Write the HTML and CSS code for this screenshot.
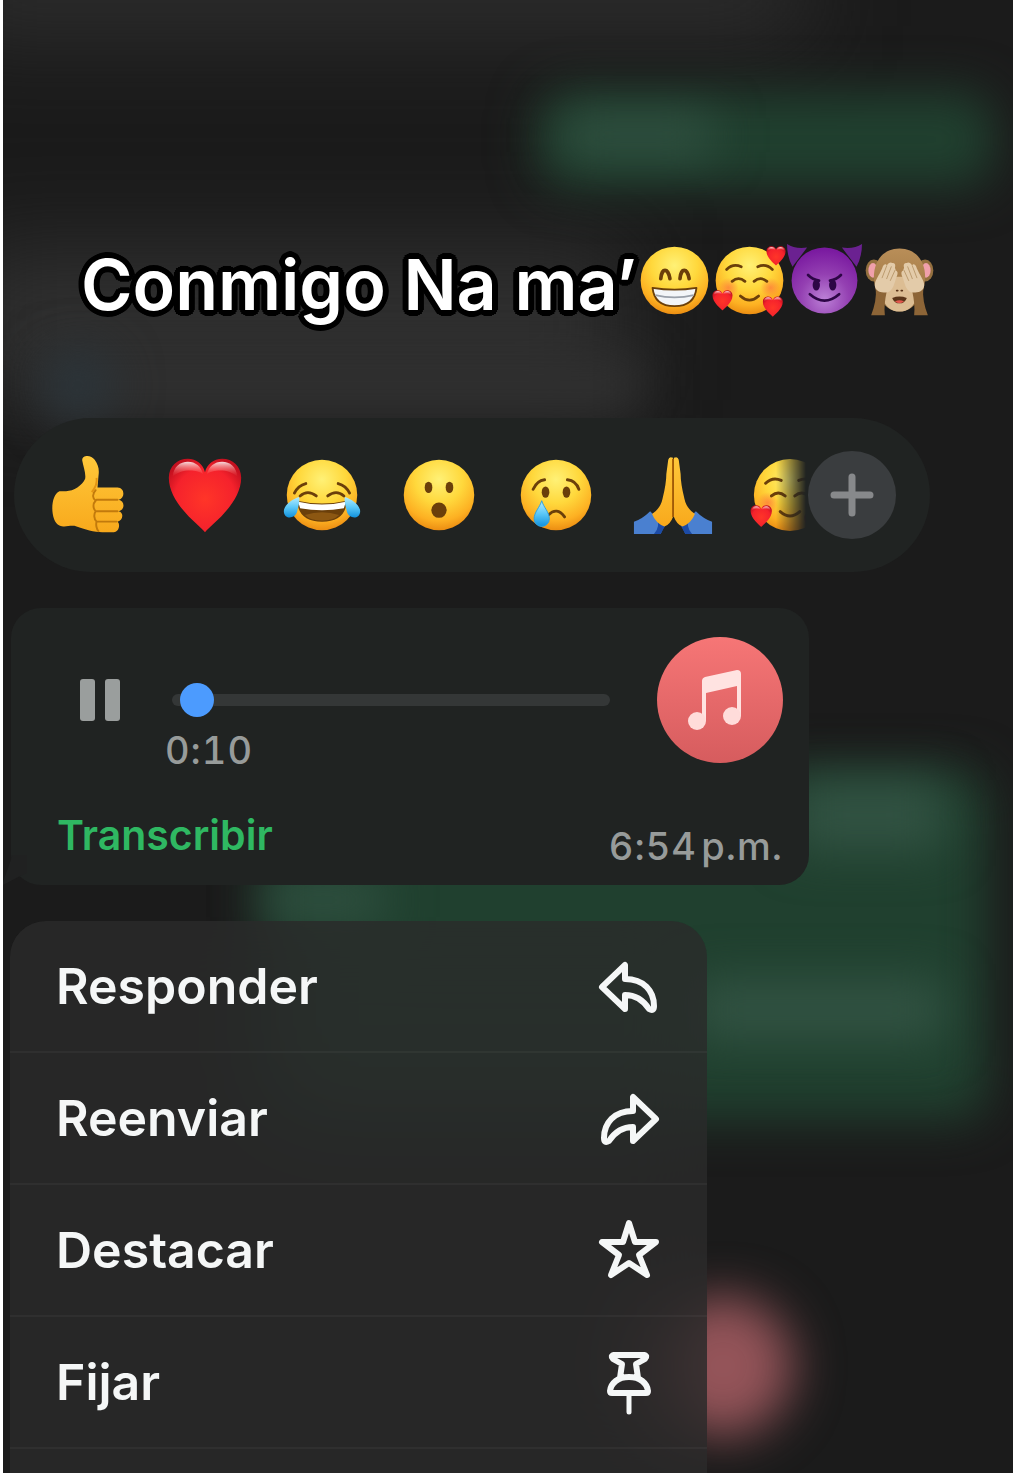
FILE: index.html
```html
<!DOCTYPE html>
<html lang="es">
<head>
  <meta charset="UTF-8" />
  <meta name="viewport" content="width=device-width, initial-scale=1" />
  <title>Conmigo Na ma’</title>
  <link rel="stylesheet" href="styles.css">
</head>
<body>
  <!-- shared emoji drawings -->
  <svg class="defs" width="0" height="0" aria-hidden="true">
    <defs>
      <radialGradient id="face" cx="50%" cy="28%" r="75%">
        <stop offset="0" stop-color="#fff176" />
        <stop offset="0.45" stop-color="#ffd83c" />
        <stop offset="0.78" stop-color="#fdb022" />
        <stop offset="1" stop-color="#e8860f" />
      </radialGradient>
      <radialGradient id="purple" cx="50%" cy="78%" r="75%">
        <stop offset="0" stop-color="#bb80d6" />
        <stop offset="0.5" stop-color="#9440b2" />
        <stop offset="1" stop-color="#7a1aa0" />
      </radialGradient>
      <radialGradient id="red" cx="50%" cy="55%" r="60%">
        <stop offset="0" stop-color="#ff3528" />
        <stop offset="0.7" stop-color="#f5222c" />
        <stop offset="1" stop-color="#c4101f" />
      </radialGradient>
      <linearGradient id="shine" x1="0" y1="0" x2="0" y2="1">
        <stop offset="0" stop-color="#fff" stop-opacity="0.85" />
        <stop offset="1" stop-color="#ff5a55" stop-opacity="0" />
      </linearGradient>
      <linearGradient id="tear" x1="0" y1="0" x2="0" y2="1">
        <stop offset="0" stop-color="#b5ecff" />
        <stop offset="0.5" stop-color="#5cc8f8" />
        <stop offset="1" stop-color="#1191dc" />
      </linearGradient>
      <linearGradient id="skin" x1="0" y1="0" x2="0" y2="1">
        <stop offset="0" stop-color="#ffc83a" />
        <stop offset="1" stop-color="#f8a91c" />
      </linearGradient>
      <linearGradient id="fur" x1="0" y1="0" x2="0" y2="1">
        <stop offset="0" stop-color="#b98e58" />
        <stop offset="1" stop-color="#97703f" />
      </linearGradient>
      <radialGradient id="blush">
        <stop offset="0" stop-color="#ff7a3d" stop-opacity="0.75" />
        <stop offset="1" stop-color="#ff7a3d" stop-opacity="0" />
      </radialGradient>

      <symbol id="heart" viewBox="0 0 80 80">
        <path fill="url(#red)" d="M40 79C36 73 2 50 2 22 2 10 11 2 22 2c9 0 16 6 18 14 2-8 9-14 18-14 11 0 20 8 20 20 0 28-34 51-38 57z" />
        <path fill="url(#shine)" d="M6 21C7 10 14 5 22 5c8 0 14 5 16 13-6-5-24-6-32 3zM42 18C44 10 50 5 58 5c8 0 15 5 16 16-8-9-26-8-32-3z" />
      </symbol>

      <symbol id="thumb" viewBox="-2 -2 84 84">
        <path fill="url(#skin)" d="M10 36h7c8 0 17-6 20-13 1-6-2-13-3-19-1-6 9-7 13-1 4 6 5 10 4 17l-1 12h21c8 0 8 12 1 13 7 1 7 11 0 12 6 1 5 10-1 11 3 2 2 11-4 11H55c-8 0-19-3-27-6-7-2-12 2-18-1-10-4-10-32 0-36z" />
        <path fill="none" stroke="#c27a0c" stroke-width="2" stroke-linecap="round" d="M71 45H49M71 57H49M70 68H50M48 35c-4 4-3 9 0 11-3 3-3 8 0 11-2 3-2 8 1 11-1 3 0 8 2 10" />
        <path fill="none" stroke="#e39312" stroke-width="2" d="M49 22c1 6-1 10-5 15" />
      </symbol>

      <symbol id="joy" viewBox="-2 -2 84 84">
        <circle cx="40" cy="40" r="37" fill="url(#face)" />
        <path class="line" d="M11 38q4-8 12-10M57 28q8 2 12 10M17 41q8-7 17 0M46 41q9-7 17 0" />
        <path fill="#6b3f0a" d="M14 46q26 6 52 0-1 22-26 22T14 46z" />
        <path fill="#fff" d="M15 47q25 6 50 0l-2 7q-23 4-46 0z" />
        <path fill="#8c5712" d="M22 61q18-6 36 0-6 6-18 6t-18-6z" />
        <path fill="url(#tear)" d="M16 42C9 44-1 51 0 58c1 8 12 7 14-1 1-5 3-10 2-15zM64 42c7 2 17 9 16 16-1 8-12 7-14-1-1-5-3-10-2-15z" />
      </symbol>

      <symbol id="wow" viewBox="-2 -2 84 84">
        <circle cx="40" cy="40" r="37" fill="url(#face)" />
        <ellipse class="dark" cx="29" cy="32" rx="4" ry="6" />
        <ellipse class="dark" cx="51" cy="32" rx="4" ry="6" />
        <circle class="dark" cx="40" cy="56" r="8" />
      </symbol>

      <symbol id="cry" viewBox="-2 -2 84 84">
        <circle cx="40" cy="40" r="37" fill="url(#face)" />
        <path class="line" d="M16 34q4-9 12-10M52 24q9 1 12 10M32 61q9-9 17 2" />
        <ellipse class="dark" cx="29" cy="37" rx="4" ry="6" />
        <ellipse class="dark" cx="51" cy="37" rx="4" ry="6" />
        <path fill="url(#tear)" stroke="#2b9fe0" d="M25 46c-2 7-8 12-8 19a8 8 0 0 0 16 0c0-7-6-12-8-19z" />
      </symbol>

      <symbol id="pray" viewBox="-3 -2 84 84">
        <path fill="#4a80d0" d="M-2 81V68q9-3 17-11l15 15-4 9zM80 81V68q-9-3-17-11L48 72l4 9z" />
        <path fill="#1c4ba6" d="M22 63l9 9-5 9h-7q7-8 3-18zM56 63l-9 9 5 9h7q-7-8-3-18z" />
        <path fill="url(#skin)" d="M34 3q1-4 5-2v62q-3 8-9 10-9-3-13-13 9-6 11-16 4-16 4-26zM45 3q-1-4-5-2v62q3 8 9 10 9-3 13-13-9-6-11-16-4-16-4-26z" />
        <path fill="none" stroke="#a85f08" stroke-width="2" d="M39 2v61" />
      </symbol>

      <symbol id="loved" viewBox="-1 -1 82 82">
        <circle cx="40" cy="40" r="37" fill="url(#face)" />
        <circle cx="17" cy="48" r="11" fill="url(#blush)" />
        <circle cx="63" cy="48" r="11" fill="url(#blush)" />
        <path class="line" d="M15 28q7-7 16-3M49 25q9-4 16 3M21 41q7-6 14 0M45 41q7-6 14 0M30 57q10 9 20 0" />
        <use href="#heart" x="58" y="2" width="22" height="22" />
        <use href="#heart" x="-1" y="50" width="23" height="23" />
        <use href="#heart" x="54" y="57" width="23" height="23" />
      </symbol>

      <symbol id="grin" viewBox="-1 -1 82 82">
        <circle cx="40" cy="40" r="37" fill="url(#face)" />
        <path class="line thick" d="M25 38c1-12 8-12 10 0M46 38c1-12 8-12 10 0" />
        <path fill="#f3f5f8" stroke="#6b3f0a" stroke-width="2" stroke-linejoin="round" d="M16 48q24 4 48 0-2 20-24 20T16 48z" />
        <path fill="none" stroke="#9aa0aa" stroke-width="2" d="M19 56q21 5 42 0" />
      </symbol>

      <symbol id="devil" viewBox="-1 -1 82 82">
        <path fill="#6b2191" d="M-1 0q9 6 22 4L5 25Q-1 14-1 0zM81 0q-9 6-22 4l16 21q6-11 6-25z" />
        <circle cx="40" cy="40" r="36" fill="url(#purple)" />
        <path fill="none" stroke="#2d0646" stroke-width="3" stroke-linecap="round" d="M22 34q5 5 12 6M58 34q-5 5-12 6M24 55q16 14 32 0" />
        <ellipse fill="#2d0646" cx="31" cy="45" rx="4" ry="6" />
        <ellipse fill="#2d0646" cx="49" cy="45" rx="4" ry="6" />
      </symbol>

      <symbol id="monkey" viewBox="-1 -1 82 82">
        <ellipse cx="12" cy="29" rx="9" ry="12" fill="#94703f" />
        <ellipse cx="68" cy="29" rx="9" ry="12" fill="#94703f" />
        <ellipse cx="11" cy="29" rx="5" ry="8" fill="#f0a0ab" />
        <ellipse cx="69" cy="29" rx="5" ry="8" fill="#f0a0ab" />
        <path fill="url(#fur)" d="M40 5c18 0 28 14 28 31 0 20-12 38-28 38S12 56 12 36C12 19 22 5 40 5z" />
        <path fill="#dcbd93" d="M40 36c12 0 19 11 18 22-1 10-9 16-18 16s-17-6-18-16c-1-11 6-22 18-22z" />
        <path fill="#8d6537" d="M14 48l12 4c-2 9-3 18-2 26H9c4-10 6-20 5-30zM66 48l-12 4c2 9 3 18 2 26h15c-4-10-6-20-5-30z" />
        <path fill="#e3cba9" d="M32 21c3-1 4 2 3 5l1 3c3 1 2 5 0 9-2 7-4 15-11 15-6 1-12-2-12-8 0-5 5-11 8-18 1-5 5-6 5-3 2-4 5-4 6-3zM48 21c-3-1-4 2-3 5l-1 3c-3 1-2 5 0 9 2 7 4 15 11 15 6 1 12-2 12-8 0-5-5-11-8-18-1-5-5-6-5-3-2-4-5-4-6-3z" />
        <path fill="none" stroke="#b8976a" stroke-linecap="round" d="M26 24l-5 13M31 25l-5 13M35 29l-5 11M54 24l5 13M49 25l5 13M45 29l5 11" />
        <path fill="#5a3519" d="M32 59q8-3 16 0-2 6-8 6t-8-6z" />
        <path fill="#e2574d" d="M35 63q5-3 10 0-5 4-10 0z" />
        <path fill="none" stroke="#5a3519" stroke-width="2" stroke-linecap="round" d="M37 51h1M42 51h1" />
      </symbol>
    </defs>
  </svg>

  <main class="screen">
    <!-- blurred chat behind the menu -->
    <svg class="backdrop" viewBox="0 0 1010 1473" preserveAspectRatio="none" aria-hidden="true">
      <defs>
        <filter id="soft" x="-100%" y="-100%" width="300%" height="300%" color-interpolation-filters="sRGB">
          <feGaussianBlur stdDeviation="24" />
        </filter>
        <filter id="softer" x="-50%" y="-200%" width="200%" height="500%" color-interpolation-filters="sRGB">
          <feGaussianBlur stdDeviation="45" />
        </filter>
      </defs>
      <rect class="glow-grey" x="-60" y="-50" width="860" height="80" filter="url(#softer)" />
      <rect class="glow-grey" x="-40" y="250" width="660" height="150" filter="url(#softer)" />
      <rect class="glow-grey" x="40" y="355" width="600" height="60" filter="url(#soft)" />
      <circle class="glow-blue" cx="75" cy="385" r="35" filter="url(#soft)" />
      <rect class="glow-green" x="535" y="92" width="455" height="95" rx="30" filter="url(#soft)" />
      <rect class="glow-mint" x="560" y="115" width="150" height="40" filter="url(#soft)" />
      <rect class="glow-green" x="260" y="770" width="725" height="350" rx="30" filter="url(#soft)" />
      <rect class="glow-mint" x="260" y="880" width="120" height="40" filter="url(#soft)" />
      <rect class="glow-mint" x="790" y="780" width="150" height="70" filter="url(#soft)" />
      <rect class="glow-mint" x="690" y="980" width="250" height="60" filter="url(#soft)" />
      <circle class="glow-red" cx="720" cy="1366" r="70" filter="url(#soft)" />
    </svg>

    <h1 class="caption">
      <span class="caption-text">Conmigo Na ma’</span>
      <svg class="caption-emoji" role="img" aria-label="😁"><use href="#grin" /></svg>
      <svg class="caption-emoji" role="img" aria-label="🥰"><use href="#loved" /></svg>
      <svg class="caption-emoji" role="img" aria-label="😈"><use href="#devil" /></svg>
      <svg class="caption-emoji" role="img" aria-label="🙈"><use href="#monkey" /></svg>
    </h1>

    <div class="reactions">
      <div class="reaction-list">
        <button class="reaction" aria-label="👍"><svg><use href="#thumb" /></svg></button>
        <button class="reaction" aria-label="❤️"><svg viewBox="-2 -2 84 84"><use href="#heart" width="80" height="80" /></svg></button>
        <button class="reaction" aria-label="😂"><svg><use href="#joy" /></svg></button>
        <button class="reaction" aria-label="😮"><svg><use href="#wow" /></svg></button>
        <button class="reaction" aria-label="😢"><svg><use href="#cry" /></svg></button>
        <button class="reaction" aria-label="🙏"><svg><use href="#pray" /></svg></button>
        <button class="reaction" aria-label="🥰"><svg><use href="#loved" /></svg></button>
      </div>
      <button class="more" aria-label="Más reacciones">
        <svg viewBox="0 0 44 44"><path d="M22 4v36M4 22h36" /></svg>
      </button>
    </div>

    <section class="voice">
      <div class="player">
        <button class="pause" aria-label="Pausar">
          <svg viewBox="0 0 40 42"><rect width="15" height="42" rx="3" /><rect x="25" width="15" height="42" rx="3" /></svg>
        </button>
        <div class="seek">
          <input class="seek-bar" type="range" min="0" max="100" value="2" aria-label="Posición del audio">
          <span class="elapsed">0:10</span>
        </div>
        <svg class="cover" viewBox="0 0 126 126" aria-hidden="true">
          <defs>
            <linearGradient id="cover" x1="0" y1="0" x2="0" y2="1">
              <stop offset="0" stop-color="#f67676" />
              <stop offset="1" stop-color="#d65c5e" />
            </linearGradient>
          </defs>
          <circle cx="63" cy="63" r="63" fill="url(#cover)" />
          <path fill="#ffe3e1" d="M45 44q0-3 3-4l32-7q4 0 4 4v42h-4V49l-31 7v28h-4z" />
          <circle cx="40" cy="84" r="9" fill="#ffdcda" />
          <circle cx="75" cy="79" r="9" fill="#ffdcda" />
        </svg>
      </div>
      <div class="voice-footer">
        <button class="transcribe">Transcribir</button>
        <time class="sent" datetime="18:54">6:54&#8202;p.m.</time>
      </div>
    </section>

    <nav class="menu">
      <button class="menu-item">
        Responder
        <svg viewBox="0 0 64 64"><path d="M5 33L28 11v14C47 25 57 37 57 52q0 6-5 3-9-14-24-14v14z" /></svg>
      </button>
      <button class="menu-item">
        Reenviar
        <svg viewBox="0 0 64 64"><path d="M59 33L36 11v14C17 25 7 37 7 52q0 6 5 3 9-14 24-14v14z" /></svg>
      </button>
      <button class="menu-item">
        Destacar
        <svg viewBox="0 0 64 64"><path d="M32 5l6 19h21L42 37l8 20-18-12-18 12 8-20L5 24h21z" /></svg>
      </button>
      <button class="menu-item">
        Fijar
        <svg viewBox="0 0 64 64"><path d="M17 5h30q4 1 1 4l-9 5 2 14M17 5q-4 1-1 4l9 5-2 14M32 27c11 0 18 6 19 14q0 2-2 2H15q-2 0-2-2c1-8 8-14 19-14z" /><path class="needle" d="M32 44v18" /></svg>
      </button>
    </nav>
  </main>
</body>
</html>
```

FILE: styles.css
```css
* {
  box-sizing: border-box;
}

body {
  margin: 0;
  padding: 0 1px 0 3px;
  background: #fff;
  font-family: Inter, "Liberation Sans", sans-serif;
}

button {
  padding: 0;
  border: none;
  background: none;
  color: inherit;
  font: inherit;
  cursor: pointer;
}

svg {
  display: block;
  overflow: visible;
}

.defs {
  position: absolute;
}

.line {
  fill: none;
  stroke: #6b3f0a;
  stroke-width: 3;
  stroke-linecap: round;
}

.thick {
  stroke-width: 4;
}

.dark {
  fill: #6b3f0a;
}

.screen {
  position: relative;
  display: flex;
  flex-direction: column;
  min-height: 100vh;
  overflow: hidden;
  background: #1b1b1b;
}

.screen > * {
  position: relative;
}

/* backdrop */
.screen > .backdrop {
  position: absolute;
  top: 0;
  left: 0;
  width: 100%;
  height: 100%;
}

.glow-grey { fill: #303030; }
.glow-blue { fill: #2b353b; }
.glow-green { fill: #20402f; }
.glow-mint { fill: #325343; }
.glow-red { fill: #945459; }

/* caption */
.caption {
  display: flex;
  align-items: flex-start;
  margin: 243px 0 0;
  padding-left: 78px;
  line-height: 84px;
  white-space: nowrap;
}

.caption-text {
  font-size: 70px;
  font-weight: 600;
  color: #fff;
  text-shadow:
    6px 0 #000, -6px 0 #000, 0 6px #000, 0 -6px #000,
    4px 4px #000, -4px 4px #000, 4px -4px #000, -4px -4px #000,
    5px 2px #000, -5px 2px #000, 5px -2px #000, -5px -2px #000,
    2px 5px #000, -2px 5px #000, 2px -5px #000, -2px -5px #000;
}

.caption-emoji {
  flex: none;
  width: 75px;
  height: 75px;
}

/* reactions */
.reactions {
  display: flex;
  align-items: center;
  width: calc(100% - 94px);
  max-width: 916px;
  height: 154px;
  margin: 91px 0 0 11px;
  padding: 0 34px;
  border-radius: 77px;
  background: #202322;
}

.reaction-list {
  display: flex;
  flex: 1;
  align-items: center;
  gap: 37px;
  height: 100%;
  overflow: hidden;
  -webkit-mask-image: linear-gradient(to right, #000 calc(100% - 32px), transparent calc(100% - 2px));
  mask-image: linear-gradient(to right, #000 calc(100% - 32px), transparent calc(100% - 2px));
}

.reaction {
  flex: none;
}

.reaction svg {
  width: 80px;
  height: 80px;
}

.more {
  display: flex;
  flex: none;
  align-items: center;
  justify-content: center;
  width: 88px;
  height: 88px;
  border-radius: 50%;
  background: #3a3d3f;
}

.more svg {
  width: 44px;
  height: 44px;
  stroke: #87898b;
  stroke-width: 7;
  stroke-linecap: round;
}

/* voice message */
.voice {
  width: 79%;
  max-width: 798px;
  margin: 36px 0 0 8px;
  padding: 29px 26px 19px 46px;
  border-radius: 30px;
  background: #202322;
}

.voice::before {
  content: "";
  position: absolute;
  bottom: 0;
  left: -8px;
  width: 24px;
  height: 30px;
  background: #202121;
  clip-path: polygon(40% 0, 100% 0, 100% 60%, 60% 75%, 0 100%, 0 90%);
}

.player {
  display: flex;
  align-items: flex-start;
}

.pause {
  margin: 42px 45px 0 23px;
}

.pause svg {
  width: 40px;
  height: 42px;
  fill: #9a9e9d;
}

.seek {
  flex: 1;
  display: flex;
  flex-direction: column;
  gap: 13px;
  padding-top: 46px;
}

.seek-bar {
  height: 34px;
  margin: 0 47px 0 7px;
  background: none;
  -webkit-appearance: none;
  appearance: none;
}

.seek-bar::-webkit-slider-runnable-track {
  height: 12px;
  border-radius: 6px;
  background: #343737;
}

.seek-bar::-webkit-slider-thumb {
  width: 34px;
  height: 34px;
  margin-top: -11px;
  border-radius: 50%;
  background: #4c9bfe;
  -webkit-appearance: none;
}

.elapsed,
.sent {
  font-size: 38px;
  font-weight: 500;
  font-variant-numeric: tabular-nums;
  line-height: 40px;
  letter-spacing: 1px;
  color: #979b9a;
}

.cover {
  flex: none;
  width: 126px;
  height: 126px;
}

.voice-footer {
  display: flex;
  align-items: flex-start;
  justify-content: space-between;
  margin-top: 41px;
}

.transcribe {
  font-size: 41px;
  font-weight: 600;
  line-height: 48px;
  color: #2fb862;
}

.sent {
  margin-top: 15px;
}

/* context menu */
.menu {
  flex: 1;
  width: 69%;
  max-width: 697px;
  margin: 36px 0 0 7px;
  border-radius: 36px 36px 0 0;
  background: rgba(42, 42, 43, 0.8);
  backdrop-filter: blur(40px);
}

.menu-item {
  display: flex;
  align-items: center;
  justify-content: space-between;
  width: 100%;
  height: 132px;
  padding: 0 46px;
  border-bottom: 2px solid rgba(255, 255, 255, 0.04);
  font-size: 50px;
  font-weight: 600;
  color: #f5f7f7;
}

.menu-item svg {
  width: 64px;
  height: 64px;
  fill: none;
  stroke: #f5f7f7;
  stroke-width: 6;
  stroke-linecap: round;
  stroke-linejoin: round;
}

.menu-item .needle {
  stroke-width: 5;
}
```
